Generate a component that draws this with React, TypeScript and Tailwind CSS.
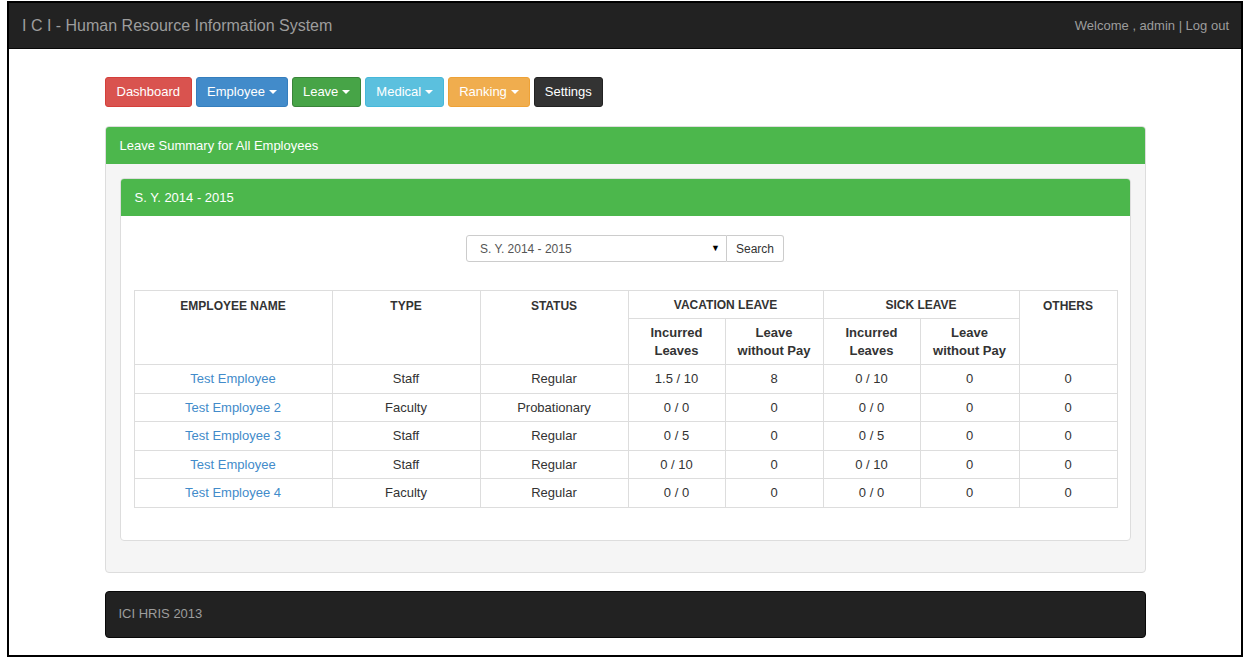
import React from 'react';

type Row = {
  name: string;
  type: string;
  status: string;
  vlIncurred: string;
  vlWop: string;
  slIncurred: string;
  slWop: string;
  others: string;
};

const rows: Row[] = [
  { name: 'Test Employee', type: 'Staff', status: 'Regular', vlIncurred: '1.5 / 10', vlWop: '8', slIncurred: '0 / 10', slWop: '0', others: '0' },
  { name: 'Test Employee 2', type: 'Faculty', status: 'Probationary', vlIncurred: '0 / 0', vlWop: '0', slIncurred: '0 / 0', slWop: '0', others: '0' },
  { name: 'Test Employee 3', type: 'Staff', status: 'Regular', vlIncurred: '0 / 5', vlWop: '0', slIncurred: '0 / 5', slWop: '0', others: '0' },
  { name: 'Test Employee', type: 'Staff', status: 'Regular', vlIncurred: '0 / 10', vlWop: '0', slIncurred: '0 / 10', slWop: '0', others: '0' },
  { name: 'Test Employee 4', type: 'Faculty', status: 'Regular', vlIncurred: '0 / 0', vlWop: '0', slIncurred: '0 / 0', slWop: '0', others: '0' },
];

const Caret = () => (
  <span className="ml-[4px] inline-block w-0 h-0 border-l-[4px] border-r-[4px] border-t-[4px] border-l-transparent border-r-transparent border-t-white align-middle" />
);

const navButtons = [
  { label: 'Dashboard', cls: 'px-[11px] bg-[#d9534f] border-[#d43f3a]', caret: false },
  { label: 'Employee', cls: 'px-[10px] bg-[#428bca] border-[#357ebd]', caret: true },
  { label: 'Leave', cls: 'px-[10px] bg-[#47a447] border-[#398439]', caret: true },
  { label: 'Medical', cls: 'px-[10px] bg-[#5bc0de] border-[#46b8da]', caret: true },
  { label: 'Ranking', cls: 'px-[10px] bg-[#f0ad4e] border-[#eea236]', caret: true },
  { label: 'Settings', cls: 'px-[10px] bg-[#333333] border-[#222222]', caret: false },
];

export default function App() {
  const th = 'border border-[#dddddd] px-2 font-bold text-[#333333]';
  const td = 'border border-[#dddddd] px-2 h-[28.5px] text-center align-middle';

  return (
    <div
      className="w-[1253px] h-[664px] bg-white pl-[7px] pt-[1px]"
      style={{ fontFamily: '"Liberation Sans", Arial, sans-serif' }}
    >
      <div className="w-[1236px] h-[656px] border-2 border-black bg-white flex flex-col">
        {/* navbar */}
        <div className="h-[46px] bg-[#222222] border-b border-[#080808] flex items-center justify-between pl-[13px] pr-[12px] shrink-0">
          <span className="text-[16px] text-[#9d9d9d]">I C I - Human Resource Information System</span>
          <span className="text-[13px] text-[#9d9d9d]">Welcome , admin | Log out</span>
        </div>

        <div className="w-[1041px] mx-auto pt-[28px]">
          {/* buttons */}
          <div className="flex gap-[4px]">
            {navButtons.map((b) => (
              <button
                key={b.label}
                className={`h-[30px] rounded-[3px] border text-[13px] text-white flex items-center ${b.cls}`}
              >
                {b.label}
                {b.caret && <Caret />}
              </button>
            ))}
          </div>

          {/* outer panel */}
          <div className="mt-[19px] border border-[#dddddd] rounded-[4px] bg-[#f5f5f5] overflow-hidden">
            <div className="h-[37px] bg-[#4cb74c] flex items-center px-[14px] text-[13px] text-white">
              Leave Summary for All Employees
            </div>
            <div className="p-[14px] pb-[31px]">
              <div className="border border-[#dddddd] rounded-[4px] bg-white overflow-hidden">
                <div className="h-[37px] bg-[#4cb74c] flex items-center px-[14px] text-[13px] text-white">
                  S. Y. 2014 - 2015
                </div>
                <div className="px-[13px] pt-[19px] pb-[32px]">
                  <div className="flex justify-center">
                    <div className="flex h-[27px] text-[12px] text-[#555555]">
                      <div className="w-[261px] border border-[#cccccc] rounded-l-[3px] flex items-center justify-between pl-[13px] pr-[6px]">
                        <span>S. Y. 2014 - 2015</span>
                        <span className="text-[9px] text-black">▼</span>
                      </div>
                      <div className="w-[57px] border border-l-0 border-[#cccccc] rounded-r-[3px] flex items-center justify-center text-[#333333]">
                        Search
                      </div>
                    </div>
                  </div>

                  <table className="mt-[28px] w-[983px] border-collapse text-[13px] text-[#333333] table-fixed">
                    <colgroup>
                      <col className="w-[198px]" />
                      <col className="w-[148px]" />
                      <col className="w-[148px]" />
                      <col className="w-[97px]" />
                      <col className="w-[98px]" />
                      <col className="w-[97px]" />
                      <col className="w-[99px]" />
                      <col className="w-[98px]" />
                    </colgroup>
                    <thead>
                      <tr className="h-[28px]">
                        <th rowSpan={2} className={`${th} text-[12px] align-top pt-[6px]`}>EMPLOYEE NAME</th>
                        <th rowSpan={2} className={`${th} text-[12px] align-top pt-[6px]`}>TYPE</th>
                        <th rowSpan={2} className={`${th} text-[12px] align-top pt-[6px]`}>STATUS</th>
                        <th colSpan={2} className={`${th} text-[12px] align-middle`}>VACATION LEAVE</th>
                        <th colSpan={2} className={`${th} text-[12px] align-middle`}>SICK LEAVE</th>
                        <th rowSpan={2} className={`${th} text-[12px] align-top pt-[6px]`}>OTHERS</th>
                      </tr>
                      <tr className="h-[46px]">
                        <th className={`${th} text-[13px] leading-[18px] align-middle`}>Incurred<br />Leaves</th>
                        <th className={`${th} text-[13px] leading-[18px] align-middle`}>Leave<br />without Pay</th>
                        <th className={`${th} text-[13px] leading-[18px] align-middle`}>Incurred<br />Leaves</th>
                        <th className={`${th} text-[13px] leading-[18px] align-middle`}>Leave<br />without Pay</th>
                      </tr>
                    </thead>
                    <tbody>
                      {rows.map((r, i) => (
                        <tr key={i}>
                          <td className={`${td} text-[#428bca]`}>{r.name}</td>
                          <td className={td}>{r.type}</td>
                          <td className={td}>{r.status}</td>
                          <td className={td}>{r.vlIncurred}</td>
                          <td className={td}>{r.vlWop}</td>
                          <td className={td}>{r.slIncurred}</td>
                          <td className={td}>{r.slWop}</td>
                          <td className={td}>{r.others}</td>
                        </tr>
                      ))}
                    </tbody>
                  </table>
                </div>
              </div>
            </div>
          </div>

          {/* footer */}
          <div className="mt-[18px] h-[47px] bg-[#222222] border border-[#080808] rounded-[4px] flex items-center px-[13px] text-[13px] text-[#9d9d9d]">
            ICI HRIS 2013
          </div>
        </div>
      </div>
    </div>
  );
}
